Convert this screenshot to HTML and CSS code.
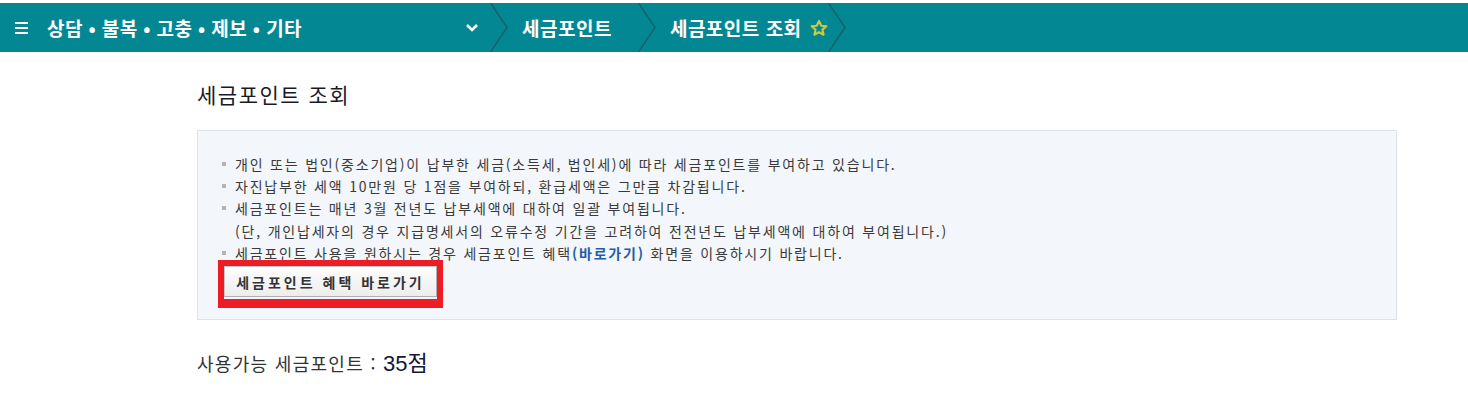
FILE: index.html
```html
<!DOCTYPE html>
<html lang="ko">
<head>
    <meta charset="UTF-8">
    <meta name="viewport" content="width=device-width, initial-scale=1.0">
    <title>세금포인트 조회</title>
    <link rel="stylesheet" href="styles.css">
</head>
<body>
    <div class="topbar">
        <div class="home">
            <div class="home-left">
                <span class="burger"><i></i><i></i><i></i></span>
                <span class="home-title">상담 • 불복 • 고충 • 제보 • 기타</span>
            </div>
            <svg class="caret" width="14" height="9" viewBox="0 0 14 9">
                <polyline points="2,2 7,7 12,2" fill="none" stroke="#fff" stroke-width="2.6"/>
            </svg>
        </div>
        <svg class="divider" width="18" height="49" viewBox="0 0 18 49">
            <polyline points="0.5,0 17,24.5 0.5,49" fill="none" stroke="#15606a" stroke-width="1.4"/>
        </svg>
        <div class="crumb">세금포인트</div>
        <svg class="divider" width="18" height="49" viewBox="0 0 18 49">
            <polyline points="0.5,0 17,24.5 0.5,49" fill="none" stroke="#15606a" stroke-width="1.4"/>
        </svg>
        <div class="crumb last">
            세금포인트 조회
            <svg class="star" width="18" height="18" viewBox="0 0 24 24">
                <polygon points="12,2.5 14.9,8.9 21.8,9.6 16.6,14.2 18.1,21 12,17.5 5.9,21 7.4,14.2 2.2,9.6 9.1,8.9" fill="none" stroke="#cfcc3c" stroke-width="2.8" stroke-linejoin="round"/>
            </svg>
        </div>
        <svg class="divider" width="18" height="49" viewBox="0 0 18 49">
            <polyline points="0.5,0 17,24.5 0.5,49" fill="none" stroke="#15606a" stroke-width="1.4"/>
        </svg>
    </div>

    <div class="content">
        <h2 class="page-title">세금포인트 조회</h2>
        <div class="infobox">
            <ul class="notes">
                <li>개인 또는 법인(중소기업)이 납부한 세금(소득세, 법인세)에 따라 세금포인트를 부여하고 있습니다.</li>
                <li>자진납부한 세액 10만원 당 1점을 부여하되, 환급세액은 그만큼 차감됩니다.</li>
                <li>세금포인트는 매년 3월 전년도 납부세액에 대하여 일괄 부여됩니다.<br>(단, 개인납세자의 경우 지급명세서의 오류수정 기간을 고려하여 전전년도 납부세액에 대하여 부여됩니다.)</li>
                <li>세금포인트 사용을 원하시는 경우 세금포인트 혜택<a href="#" class="golink">(바로가기)</a> 화면을 이용하시기 바랍니다.</li>
            </ul>
            <div class="mark">
                <button class="benefit">세금포인트 혜택 바로가기</button>
            </div>
        </div>
        <p class="avail">사용가능 세금포인트 : <strong>35점</strong></p>
    </div>
</body>
</html>
```

FILE: styles.css
```css
body {
    margin: 0;
    padding: 0;
    font-family: "Noto Sans CJK KR", "Noto Sans", sans-serif;
    color: #333;
    background: #fff;
}
.topbar {
    margin-top: 3px;
    height: 49px;
    background: #038793;
    display: flex;
    align-items: center;
    color: #fff;
}
.home {
    width: 490px;
    height: 100%;
    display: flex;
    align-items: center;
    justify-content: space-between;
    padding: 0 11px 0 15px;
    box-sizing: border-box;
}
.home-left {
    display: flex;
    align-items: center;
}
.burger {
    display: flex;
    flex-direction: column;
    gap: 3px;
    width: 13px;
    margin-right: 19px;
}
.burger i {
    display: block;
    height: 2px;
    background: #fff;
}
.home-title {
    font-size: 19px;
    font-weight: 700;
    letter-spacing: 0.4px;
}
.caret {
    display: block;
}
.divider {
    display: block;
    flex: none;
}
.crumb {
    font-size: 19px;
    font-weight: 700;
    padding: 0 26px 0 14px;
    display: flex;
    align-items: center;
    letter-spacing: 0.5px;
}
.crumb.last {
    padding-right: 0;
}
.star {
    margin-left: 8px;
}
.content {
    width: 1200px;
    margin-left: 197px;
}
.page-title {
    margin: 28px 0 22px;
    font-size: 21px;
    font-weight: 400;
    line-height: 28px;
    color: #1a1a24;
    letter-spacing: 1.5px;
}
.infobox {
    background: #f3f6fb;
    border: 1px solid #dde3ec;
    padding: 22px 0 11px 20px;
}
.notes {
    list-style: none;
    margin: 0;
    padding: 0 0 0 4px;
    font-size: 14px;
    line-height: 22.2px;
    letter-spacing: 1.8px;
    color: #3a3a3a;
}
.notes li {
    position: relative;
    padding-left: 13px;
}
.notes li::before {
    content: "";
    position: absolute;
    left: 0;
    top: 9px;
    width: 4px;
    height: 4px;
    background: #b4b4b4;
}
.golink {
    color: #1f5ea8;
    font-weight: 700;
    text-decoration: none;
}
.mark {
    display: inline-block;
    margin-top: -4px;
    border: 6px solid #ee1c25;
    border-bottom-width: 9px;
    padding-bottom: 2px;
    position: relative;
}
.benefit {
    display: block;
    width: 213px;
    height: 31px;
    font-family: "Noto Sans CJK KR", sans-serif;
    font-size: 14px;
    font-weight: 700;
    letter-spacing: 3px;
    color: #333;
    background: linear-gradient(#fdfdfd, #ededed);
    border: 1px solid #c6c6c6;
    border-right-color: #b0b0b0;
    border-bottom-color: #b0b0b0;
    cursor: pointer;
}
.avail {
    margin: 25px 0 0;
    font-size: 18px;
    color: #333;
    letter-spacing: 1.3px;
}
.avail strong {
    font-family: "Liberation Sans", "Noto Sans CJK KR", sans-serif;
    font-size: 22px;
    font-weight: 400;
    color: #16163a;
    letter-spacing: 0;
}
```
